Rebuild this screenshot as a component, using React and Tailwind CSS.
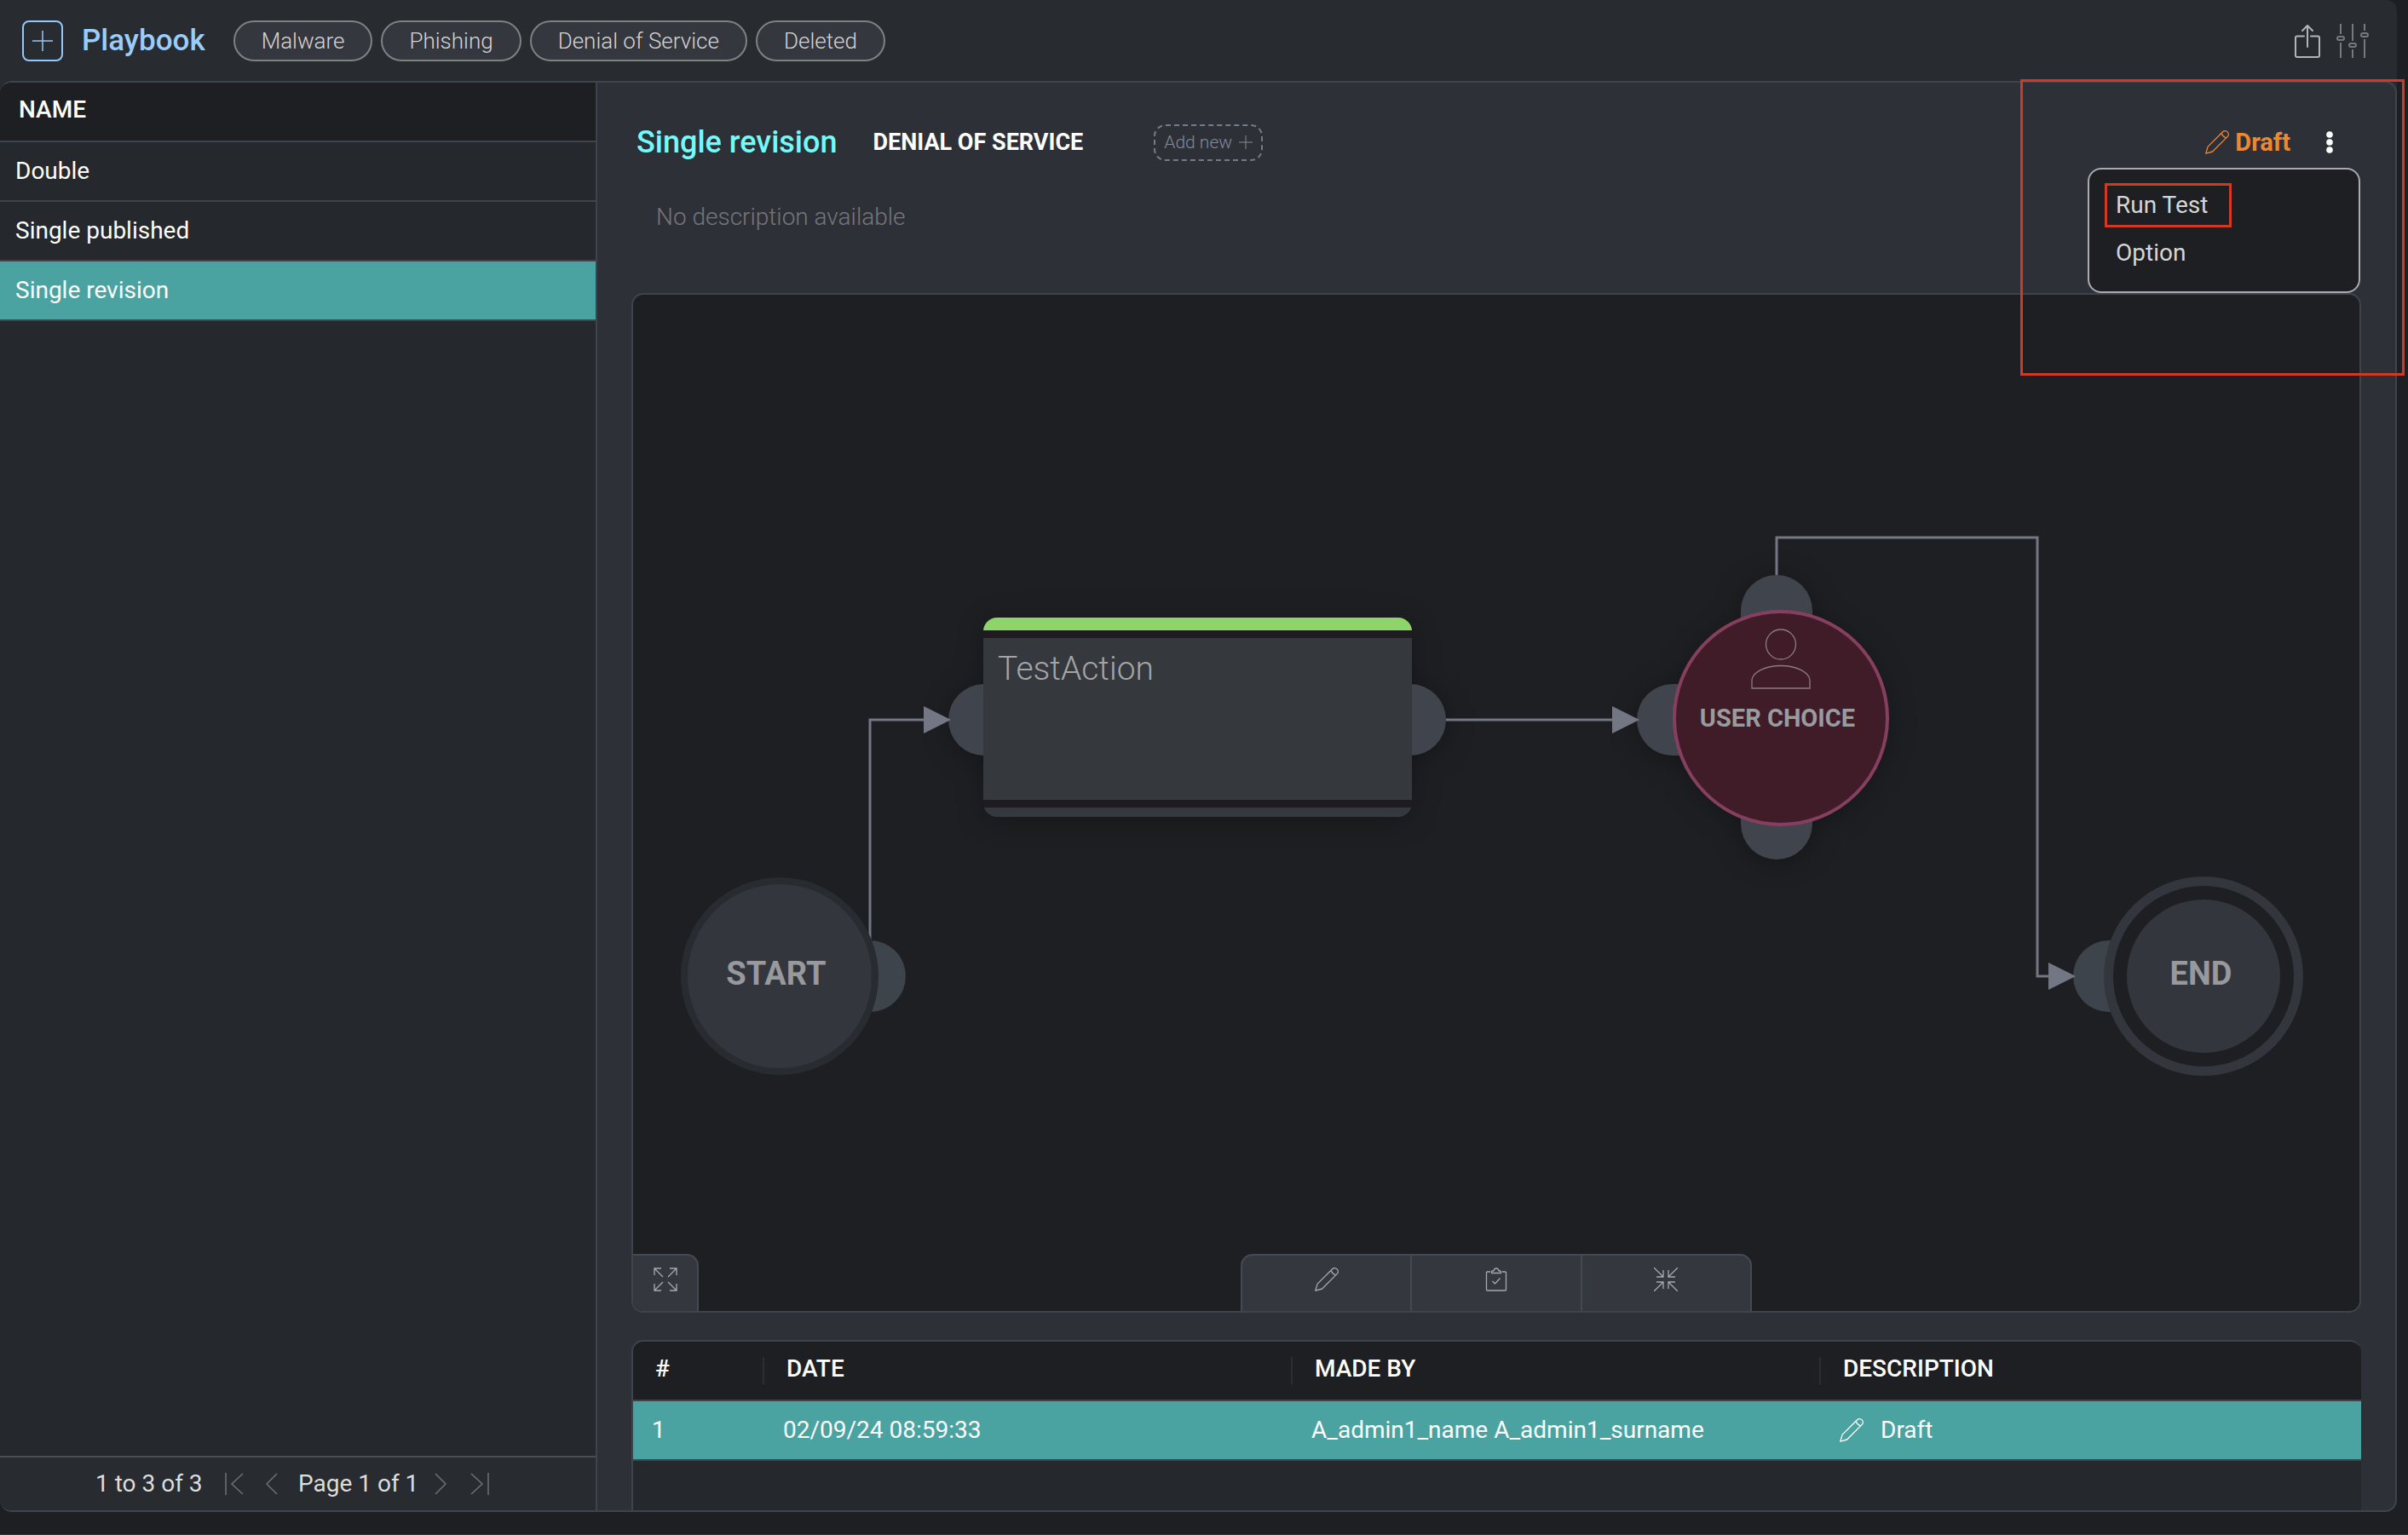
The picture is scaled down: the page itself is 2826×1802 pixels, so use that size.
import React from "react";

const FILTERS = ["Malware", "Phishing", "Denial of Service", "Deleted"];

const PLAYBOOKS = [
  { name: "Double" },
  { name: "Single published" },
  { name: "Single revision", selected: true },
];

function Pencil({ className }) {
  return (
    <svg viewBox="0 0 28 28" className={className} fill="none" stroke="currentColor" strokeWidth="1.3" strokeLinejoin="round" aria-hidden="true">
      <path d="M.8 27.2L3 19.4L20.6 1.8C22.2 .2 24.6 .4 26.1 1.9C27.6 3.4 27.8 5.8 26.2 7.4L8.6 25Z" />
      <path d="M19 3.4C20 6.2 21.800 8 24.600 9" />
    </svg>
  );
}

function Expand() {
  return (
    <svg viewBox="0 0 28 28" className="size-7" fill="none" stroke="currentColor" strokeWidth="1.3" aria-hidden="true">
      <path d="M1 9V1H9 M1 1L11 11 M19 1H27V9 M27 1L17 11 M1 19V27H9 M1 27L11 17 M19 27H27V19 M27 27L17 17" />
    </svg>
  );
}

function Shrink() {
  return (
    <svg viewBox="0 0 28 28" className="size-7" fill="none" stroke="currentColor" strokeWidth="1.3" aria-hidden="true">
      <path d="M0 0L11 11 M11 3V11H3 M28 0L17 11 M17 3V11H25 M0 28L11 17 M3 17H11V25 M28 28L17 17 M25 17H17V25" />
    </svg>
  );
}

function Clipboard() {
  return (
    <svg viewBox="0 0 28 28" className="size-7" fill="none" stroke="currentColor" strokeWidth="1.3" strokeLinejoin="round" aria-hidden="true">
      <path d="M7 5H3.5Q2.5 5 2.5 6V26Q2.5 27 3.5 27H24.5Q25.5 27 25.5 26V6Q25.5 5 24.5 5H21" />
      <path d="M8.5 6.5V5Q8.5 4 9.5 4H11Q11.5 1 14 1T17 4H18.5Q19.5 4 19.5 5V6.5Z" />
      <path d="M9.5 16L12.5 19L18.5 12.5" />
    </svg>
  );
}

function Share() {
  return (
    <svg viewBox="0 0 32 40" className="h-10 w-8" fill="none" stroke="#b4b5b7" strokeWidth="2" strokeLinecap="round" strokeLinejoin="round" aria-hidden="true">
      <path d="M13 14.500H5Q3 14.500 3 16.500V37Q3 39 5 39H29Q31 39 31 37V16.500Q31 14.500 29 14.500H21" />
      <path d="M17 27V2 M11 8L17 2L23 8" />
    </svg>
  );
}

function Sliders() {
  return (
    <svg viewBox="0 0 40 40" className="size-10" fill="none" stroke="#77797c" strokeWidth="2" aria-hidden="true">
      <path d="M6 0V12 M6 22V40 M20 0V20 M20 30V40 M34 0V8 M34 18V40" />
      <rect x="2" y="15" width="8" height="4" rx="2" />
      <rect x="16" y="23" width="8" height="4" rx="2" />
      <rect x="30" y="11" width="8" height="4" rx="2" />
    </svg>
  );
}

function Chevron({ d, wide }) {
  return (
    <svg viewBox={wide ? "0 0 22 28" : "0 0 14 28"} className={wide ? "h-7 w-[22px]" : "h-7 w-3.5"} fill="none" stroke="#6f7175" strokeWidth="1.5" aria-hidden="true">
      <path d={d} />
    </svg>
  );
}

function TopBar() {
  return (
    <header className="flex h-[95px] shrink-0 items-center rounded-tr-xl bg-[#282b2f] pr-8 pl-[26px]">
      <button type="button" aria-label="Add playbook" className="flex size-12 items-center justify-center rounded-lg border-2 border-[#92c9f8] text-[#92c9f8]">
        <svg viewBox="0 0 24 24" className="size-6" stroke="currentColor" strokeWidth="1.5" aria-hidden="true">
          <path d="M12 0V24 M0 12H24" />
        </svg>
      </button>
      <h1 className="ml-[22px] text-[35px] leading-10 font-medium text-[#9acdfb]">Playbook</h1>
      <nav aria-label="Categories" className="ml-[33px] flex gap-2.5">
        {FILTERS.map((f) => (
          <button key={f} type="button" className="h-12 rounded-full border-2 border-[#808183] bg-[#35373f] px-[31px] text-[26px] leading-8 font-light text-[#d3d4d5]">
            {f}
          </button>
        ))}
      </nav>
      <div className="ml-auto flex gap-[18px]">
        <button type="button" aria-label="Export"><Share /></button>
        <button type="button" aria-label="Settings"><Sliders /></button>
      </div>
    </header>
  );
}

function Sidebar() {
  return (
    <aside className="flex w-[701px] shrink-0 flex-col border-r-2 border-[#3e444b] bg-[#25282c]">
      <table className="w-full border-separate border-spacing-0 text-left text-[28px] leading-8 text-white">
        <thead>
          <tr className="bg-[#1e1f22]">
            <th scope="col" className="h-[70px] border-b-2 border-[#3e444b] pt-0 pr-0 pb-1 pl-[22px] font-medium">NAME</th>
          </tr>
        </thead>
        <tbody>
          {PLAYBOOKS.map((p) => (
            <tr key={p.name} className={p.selected ? "bg-[#4aa3a1]" : ""}>
              <td className="h-[70px] border-b-2 border-[#3e444b] py-0 pr-0 pl-[18px]">{p.name}</td>
            </tr>
          ))}
        </tbody>
      </table>
      <footer className="mt-auto flex h-16 items-center border-t-2 border-[#4a4e57] bg-[#282b2f] pl-28 text-[28px] leading-8 text-[#dcdddd]">
        <span className="w-[152px]">1 to 3 of 3</span>
        <button type="button" aria-label="First page" className="mr-[26px]"><Chevron wide d="M1 1V27 M21 2L8 14L21 26" /></button>
        <button type="button" aria-label="Previous page" className="mr-6"><Chevron d="M13 2L1 14L13 26" /></button>
        <span className="w-[160px]">Page 1 of 1</span>
        <button type="button" aria-label="Next page" className="mr-7"><Chevron d="M1 2L13 14L1 26" /></button>
        <button type="button" aria-label="Last page"><Chevron wide d="M1 2L14 14L1 26 M21 1V27" /></button>
      </footer>
    </aside>
  );
}

function Links() {
  return (
    <svg viewBox="0 0 2025 1193" className="absolute top-0 left-px h-[1193px] w-[2025px]" fill="none" aria-hidden="true">
      <g fill="#40444c" className="drop-shadow-[0_4px_16px_rgba(0,0,0,0.3)]">
        <circle cx="411" cy="499" r="42" />
        <circle cx="911" cy="499" r="42" />
        <rect x="412" y="380" width="499" height="232" rx="16" />
      </g>
      <g fill="#40444c" className="drop-shadow-[0_4px_16px_rgba(0,0,0,0.3)]">
        <circle cx="1346" cy="497" r="125" />
        <path d="M1299 390V371A42 42 0 0 1 1383 371V390Z" />
        <path d="M1299 600V621A42 42 0 0 0 1383 621V600Z" />
        <path d="M1240 457H1219A42 42 0 0 0 1219 541H1240Z" />
      </g>
      <g fill="#3e444b">
        <circle cx="277" cy="800" r="42" />
        <path d="M1750 758H1731A42 42 0 0 0 1731 842H1750Z" />
      </g>
      <g stroke="#737783" strokeWidth="3">
        <path d="M277 758V499H342" />
        <path d="M953 499H1150" />
        <path d="M1341 329V285H1647V800H1662" />
      </g>
      <g fill="#737783">
        <path d="M340 483L372 499L340 515Z" />
        <path d="M1148 483L1180 499L1148 515Z" />
        <path d="M1660 784L1692 800L1660 816Z" />
      </g>
    </svg>
  );
}

function Canvas() {
  return (
    <section aria-label="Workflow" className="relative min-h-0 flex-1 overflow-hidden rounded-[14px] border-2 border-[#3e444b] bg-[#1e1f22]">
      <Links />
      <div className="absolute top-[684px] left-[56px] flex size-[232px] items-center justify-center rounded-full border-8 border-[#282b2f] bg-[#34363e] pr-2 pb-1.5 text-[38px] leading-10 font-bold text-[#97999c]">
        START
      </div>
      <div className="absolute top-[379px] left-[411px] flex h-[234px] w-[503px] flex-col overflow-hidden rounded-2xl bg-[#1e1c21]">
        <div className="h-[15px] bg-[#8fd36b]" />
        <div className="mt-[9px] mb-[9px] flex-1 bg-[#35383c] pt-3.5 pl-[17px] text-[39px] leading-11 font-light text-[#a3a5a7]">TestAction</div>
        <div className="h-[11px] bg-[#35383f]" />
      </div>
      <div className="absolute top-[370px] left-[1220px] flex size-[254px] flex-col items-center rounded-full border-4 border-[#863f5e] bg-[#3f1c28] pt-[18px]">
        <svg viewBox="0 0 70 71" className="h-[71px] w-[70px]" fill="none" stroke="#8d7b82" strokeWidth="1.3" aria-hidden="true">
          <circle cx="35" cy="18.5" r="17.5" />
          <path d="M1 70V60C2 51 17 43.5 35 43.5S68 51 69 60V70Z" />
        </svg>
        <div className="mt-4 pr-2 text-[29px] leading-9 font-bold whitespace-nowrap text-[#989c9f]">USER CHOICE</div>
      </div>
      <div className="absolute top-[683px] left-[1726px] size-[234px] rounded-full border-[11px] border-[#34363e] bg-[#1e1f22] p-4">
        <div className="flex size-full items-center justify-center rounded-full bg-[#34363e] pr-1.5 pb-1.5 text-[38px] leading-10 font-bold text-[#97999c]">END</div>
      </div>

      <button type="button" aria-label="Expand" className="absolute bottom-0 left-0 flex h-[67px] w-[77px] justify-center rounded-tr-[14px] border-t-2 border-r-2 border-[#444a54] bg-[#35373f] pt-3.5 text-[#a7a9ac]">
        <Expand />
      </button>
      <div className="absolute bottom-0 left-[713px] flex h-[67px] w-[600px] divide-x-2 divide-[#444a54] overflow-hidden rounded-t-[14px] border-x-2 border-t-2 border-[#444a54] bg-[#35373f] text-[#a7a9ac]">
        <button type="button" aria-label="Edit" className="flex flex-1 justify-center pt-3.5"><Pencil className="size-7" /></button>
        <button type="button" aria-label="Checklist" className="flex flex-1 justify-center pt-3.5"><Clipboard /></button>
        <button type="button" aria-label="Collapse" className="flex flex-1 justify-center pt-3.5"><Shrink /></button>
      </div>
    </section>
  );
}

function Heading({ children, divider = true }) {
  return (
    <th scope="col" className="h-[70px] border-b-2 border-[#3e444b] p-0 font-medium">
      <div className={divider ? "flex h-8 items-center border-l-2 border-[#2b2d30] pb-1 pl-[26px]" : "flex h-8 items-center pb-1 pl-[26px]"}>{children}</div>
    </th>
  );
}

function Cell({ children, first = false }) {
  return (
    <td className={first ? "h-[70px] border-b-2 border-[#3e444b] py-0 pr-0 pl-[22px]" : "h-[70px] border-b-2 border-[#3e444b] py-0 pr-0 pl-6"}>
      {children}
    </td>
  );
}

function Revisions() {
  return (
    <div className="mt-8 h-[200px] shrink-0 overflow-hidden rounded-t-[14px] border-t-2 border-l-2 border-[#3e444b] bg-[#25282c]">
      <table className="w-full table-fixed border-separate border-spacing-0 text-left text-[28px] leading-8 text-white">
        <colgroup>
          <col className="w-[152px]" />
          <col className="w-[620px]" />
          <col className="w-[620px]" />
          <col />
        </colgroup>
        <thead>
          <tr className="bg-[#1e1f22]">
            <Heading divider={false}>#</Heading>
            <Heading>DATE</Heading>
            <Heading>MADE BY</Heading>
            <Heading>DESCRIPTION</Heading>
          </tr>
        </thead>
        <tbody>
          <tr className="bg-[#4aa3a1]">
            <Cell first>1</Cell>
            <Cell>02/09/24 08:59:33</Cell>
            <Cell>A_admin1_name A_admin1_surname</Cell>
            <Cell>
              <span className="flex items-center gap-5"><Pencil className="size-7" />Draft</span>
            </Cell>
          </tr>
        </tbody>
      </table>
    </div>
  );
}

function Detail() {
  return (
    <div className="flex min-w-0 flex-1 flex-col pr-10 pl-10">
      <div className="relative flex h-[247px] shrink-0 flex-col pt-[46px]">
        <div className="flex h-12 items-center pl-1.5">
          <h2 className="text-[36px] leading-10 font-medium text-[#72fbfb]">Single revision</h2>
          <h3 className="ml-[42px] text-[27px] leading-8 font-bold text-white">DENIAL OF SERVICE</h3>
          <button type="button" className="ml-[83px] flex h-[43px] items-center gap-2 rounded-[14px] border-2 border-dashed border-[#727b89] px-2.5 text-[21px] leading-6 font-light text-[#818a98]">
            Add new
            <svg viewBox="0 0 16 16" className="size-4" stroke="currentColor" aria-hidden="true"><path d="M8 0V16 M0 8H16" /></svg>
          </button>
          <div className="ml-auto flex items-center gap-[7px] text-[29px] leading-8 font-bold text-[#ee8732]">
            <Pencil className="size-7" />
            Draft
          </div>
          <button type="button" aria-label="More actions" className="mr-[29px] ml-[38px] flex h-10 w-4 items-center justify-center">
            <svg viewBox="0 0 8 26" className="h-[26px] w-2" fill="#fff" aria-hidden="true">
              <circle cx="4" cy="4" r="3.8" /><circle cx="4" cy="13" r="3.8" /><circle cx="4" cy="22" r="3.8" />
            </svg>
          </button>
        </div>
        <p className="mt-12 pl-[29px] text-[28px] leading-8 font-light text-[#74767a]">No description available</p>
        <div role="menu" className="absolute top-[100px] right-px z-10 flex h-[147px] w-80 flex-col items-start rounded-[16px] border-2 border-[#a9abb0] bg-[#1e1f22] pt-4 pl-[18px] text-[28px] leading-8 text-[#d5d6d7]">
          <button type="button" role="menuitem" className="h-[52px] w-[149px] border-[3px] border-[#d03a22] pl-2.5 text-left">Run Test</button>
          <button type="button" role="menuitem" className="h-[60px] pl-[13px] text-left">Option</button>
        </div>
      </div>
      <Canvas />
      <Revisions />
    </div>
  );
}

export default function App() {
  return (
    <div className="relative flex h-screen flex-col overflow-hidden border-b border-[#35373b] bg-[#1e1f22] pr-[13px] pb-[26px] font-['Roboto',sans-serif]">
      <TopBar />
      <div className="flex min-h-0 flex-1 bg-[linear-gradient(#282b2f_50%,#1e1f22_50%)]">
        <main className="flex min-h-0 flex-1 overflow-hidden rounded-[14px] border-y-2 border-r-2 border-[#3e444b] bg-[#2e3038]">
          <Sidebar />
          <Detail />
        </main>
      </div>
      <div className="pointer-events-none absolute top-[93px] right-1 z-20 h-[348px] w-[451px] border-[3px] border-[#d03a22]" />
    </div>
  );
}
